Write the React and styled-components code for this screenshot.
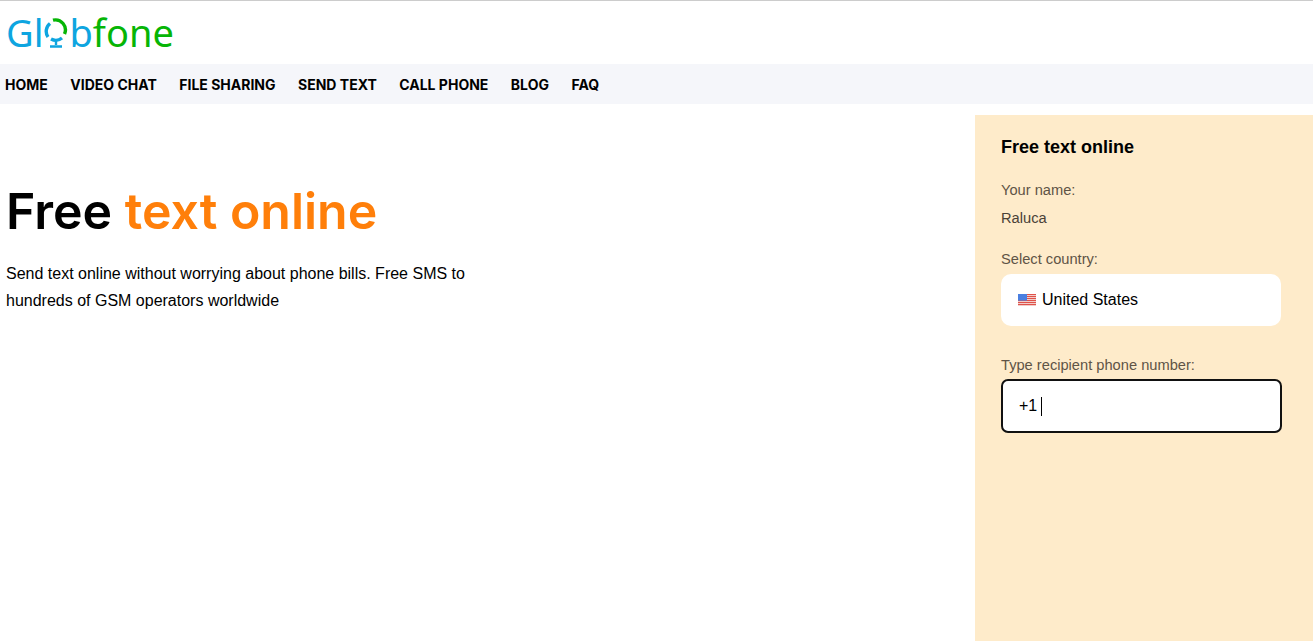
import React from "react";
import styled, { createGlobalStyle } from "styled-components";

const Global = createGlobalStyle`
  html, body { margin: 0; padding: 0; background: #fff; height: 100%; overflow: hidden; }
  #root { height: 100%; }
`;
const Page = styled.div`
  height: 641px;
  display: flex;
  flex-direction: column;
  border-top: 1px solid #ccc;
  box-sizing: border-box;
  font-family: "Liberation Sans", Arial, sans-serif;
`;
const Header = styled.header`
  height: 63px;
  flex: none;
  display: flex;
  align-items: center;
  padding-left: 6px;
`;
const Logo = styled.div`
  display: flex;
  align-items: center;
  font-family: "Noto Sans", sans-serif;
  font-size: 38px;
  line-height: 1;
  letter-spacing: 0;
  margin-top: -2px;
`;
const LogoPart = styled.span`
  color: ${(p) => p.$color};
`;
const Nav = styled.nav`
  height: 40px;
  flex: none;
  background: #f5f6fa;
  display: flex;
  align-items: center;
  gap: 22.5px;
  padding-left: 5px;
`;
const NavLink = styled.a`
  font-family: Inter, sans-serif;
  font-weight: 700;
  font-size: 14px;
  color: #000;
  text-transform: uppercase;
`;
const Main = styled.main`
  flex: 1;
  display: flex;
  justify-content: space-between;
  padding-top: 11px;
  min-height: 0;
`;
const Hero = styled.section`
  padding: 64px 0 0 6px;
  width: 500px;
`;
const Title = styled.h1`
  margin: 0 0 17px;
  font-family: Inter, sans-serif;
  font-weight: 600;
  font-size: 50px;
  line-height: 64px;
  color: #000;
`;
const Accent = styled.span`
  color: #ff7f0a;
`;
const Lead = styled.p`
  margin: 0;
  font-size: 16px;
  line-height: 27px;
  color: #000;
`;
const Aside = styled.aside`
  width: 338px;
  box-sizing: border-box;
  background: #feebca;
  padding: 21px 32px 0 26px;
`;
const AsideTitle = styled.h2`
  margin: 0 0 22px;
  font-size: 18px;
  line-height: 22px;
  font-weight: 700;
  color: #000;
`;
const Label = styled.div`
  font-size: 14.67px;
  line-height: 20px;
  color: #5f5446;
`;
const NameValue = styled.div`
  font-size: 14.67px;
  line-height: 20px;
  color: #4a4238;
  margin: 8px 0 21px;
`;
const Select = styled.div`
  margin-top: 5px;
  height: 52px;
  width: 280px;
  box-sizing: border-box;
  background: #fff;
  border-radius: 10px;
  display: flex;
  align-items: center;
  gap: 6px;
  padding-left: 17px;
  font-size: 16px;
  color: #000;
  margin-bottom: 29px;
`;
const Input = styled.div`
  margin-top: 4px;
  height: 54px;
  width: 281px;
  box-sizing: border-box;
  background: #fff;
  border: 2px solid #111;
  border-radius: 7px;
  display: flex;
  align-items: center;
  padding-left: 16px;
  font-size: 16px;
  color: #000;
`;
const Caret = styled.span`
  width: 1px;
  height: 19px;
  background: #000;
  margin-left: 4px;
`;

const Globe = () => (
  <svg width="24" height="36" viewBox="0 0 24 36" style={{ margin: "6px 1px 0 1px" }}>
    <path d="M6 6.5A10 10 0 0 0 4 20" fill="none" stroke="#0ea5e0" strokeWidth="3.4" />
    <path d="M9 3.2A10 10 0 0 1 20.5 17" fill="none" stroke="#06b506" strokeWidth="3.4" />
    <path d="M18 21A10 10 0 0 1 7 22" fill="none" stroke="#0ea5e0" strokeWidth="3.4" />
    <path d="M12 23v5M6 29.5h12" fill="none" stroke="#0ea5e0" strokeWidth="2.4" />
  </svg>
);

const Flag = () => (
  <svg width="18" height="12" viewBox="0 0 18 12">
    <rect width="18" height="12" fill="#f3dcd8" />
    {[0, 2, 4, 6, 8, 10].map((y) => (
      <rect key={y} y={y} width="18" height="1.1" fill="#e0524a" />
    ))}
    <rect width="9" height="6.6" fill="#4a7fe0" />
  </svg>
);

const links = ["Home", "Video chat", "File sharing", "Send text", "Call phone", "Blog", "FAQ"];

export default function App() {
  return (
    <Page>
      <Global />
      <Header>
        <Logo>
          <LogoPart $color="#0ea5e0">Gl</LogoPart>
          <Globe />
          <LogoPart $color="#0ea5e0">b</LogoPart>
          <LogoPart $color="#06b506">fone</LogoPart>
        </Logo>
      </Header>
      <Nav>
        {links.map((l) => (
          <NavLink key={l}>{l}</NavLink>
        ))}
      </Nav>
      <Main>
        <Hero>
          <Title>
            Free <Accent>text online</Accent>
          </Title>
          <Lead>
            Send text online without worrying about phone bills. Free SMS to hundreds of GSM operators worldwide
          </Lead>
        </Hero>
        <Aside>
          <AsideTitle>Free text online</AsideTitle>
          <Label>Your name:</Label>
          <NameValue>Raluca</NameValue>
          <Label>Select country:</Label>
          <Select>
            <Flag />
            United States
          </Select>
          <Label>Type recipient phone number:</Label>
          <Input>
            +1
            <Caret />
          </Input>
        </Aside>
      </Main>
    </Page>
  );
}
